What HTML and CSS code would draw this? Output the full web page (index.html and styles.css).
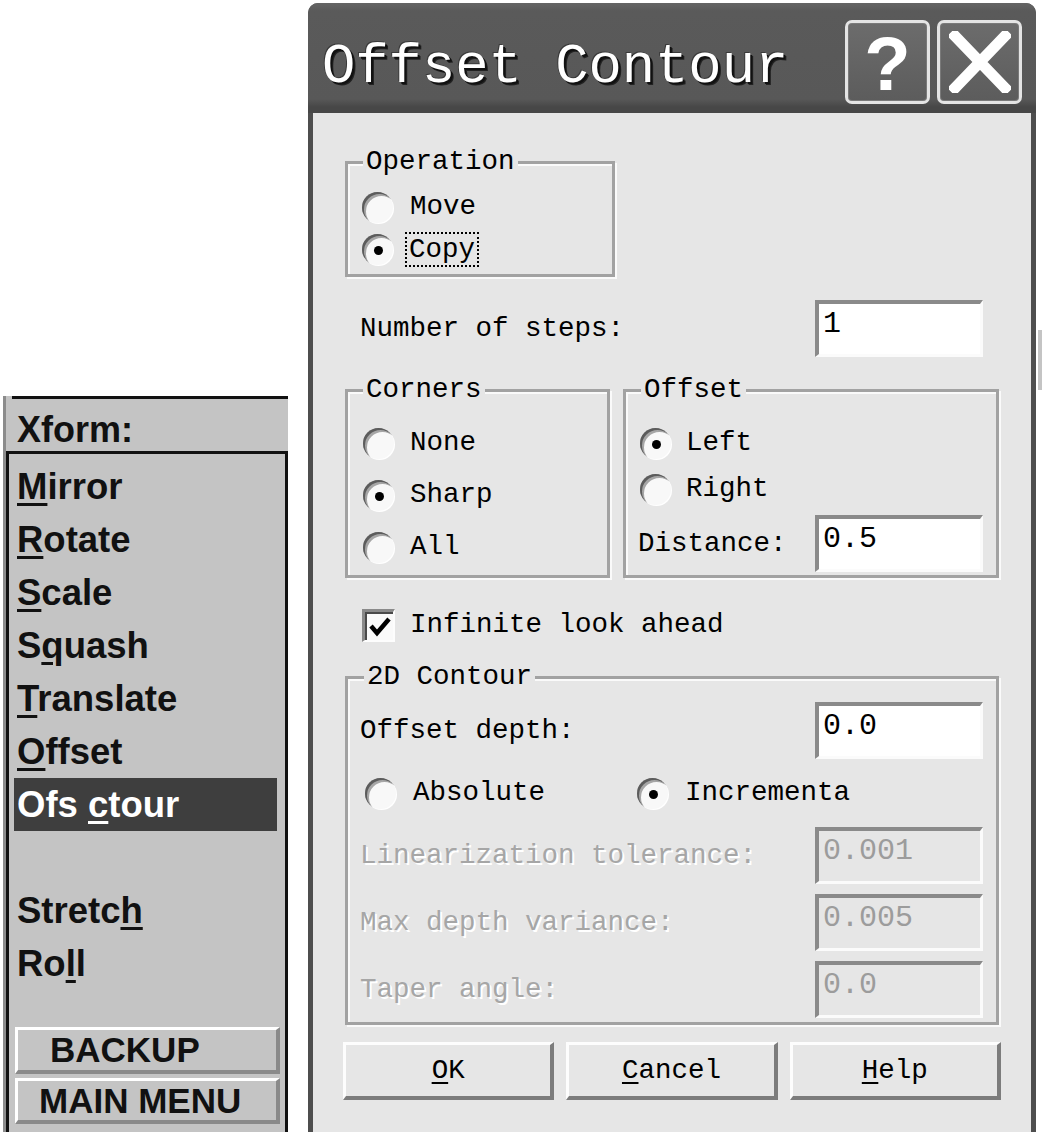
FILE: index.html
```html
<!DOCTYPE html>
<html>
<head>
<meta charset="utf-8">
<title>Offset Contour</title>
<link rel="stylesheet" href="styles.css">
</head>
<body>
<div class="screen">
  <aside class="xpanel">
    <div class="xhead">Xform:</div>
    <div class="xbox">
      <div class="xitem"><u>M</u>irror</div>
      <div class="xitem"><u>R</u>otate</div>
      <div class="xitem"><u>S</u>cale</div>
      <div class="xitem">S<u>q</u>uash</div>
      <div class="xitem"><u>T</u>ranslate</div>
      <div class="xitem"><u>O</u>ffset</div>
      <div class="xitem sel">Ofs <u>c</u>tour</div>
      <div class="xitem"></div>
      <div class="xitem">Stretc<u>h</u></div>
      <div class="xitem">Ro<u>l</u>l</div>
      <div class="xbtn backup">BACKUP</div>
      <div class="xbtn mainmenu">MAIN MENU</div>
    </div>
  </aside>

  <section class="dialog">
    <header class="titlebar">
      <span class="title">Offset Contour</span>
      <span class="tbtn help">?</span>
      <span class="tbtn close">
        <svg width="62" height="62" viewBox="0 0 62 62"><path d="M6 5 L56 57 M56 5 L6 57" stroke="#fff" stroke-width="11" stroke-linecap="square" fill="none"/></svg>
      </span>
    </header>

    <div class="client">
      <fieldset class="group g-op">
        <legend>Operation</legend>
        <div class="opt"><span class="radio"></span><span class="lbl">Move</span></div>
        <div class="opt"><span class="radio on"></span><span class="lbl focus">Copy</span></div>
      </fieldset>

      <div class="field f-steps"><span class="lbl">Number of steps:</span><span class="input">1</span></div>

      <div class="pair">
        <fieldset class="group g-corners">
          <legend>Corners</legend>
          <div class="opt"><span class="radio"></span><span class="lbl">None</span></div>
          <div class="opt"><span class="radio on"></span><span class="lbl">Sharp</span></div>
          <div class="opt"><span class="radio"></span><span class="lbl">All</span></div>
        </fieldset>
        <fieldset class="group g-offset">
          <legend>Offset</legend>
          <div class="opt"><span class="radio on"></span><span class="lbl">Left</span></div>
          <div class="opt"><span class="radio"></span><span class="lbl">Right</span></div>
          <div class="field f-dist"><span class="lbl">Distance:</span><span class="input">0.5</span></div>
        </fieldset>
      </div>

      <div class="check-row">
        <span class="check"><svg width="26" height="26" viewBox="0 0 26 26"><path d="M4 12 L10 19 L22 5" stroke="#000" stroke-width="4.5" fill="none"/></svg></span>
        <span class="lbl">Infinite look ahead</span>
      </div>

      <fieldset class="group g-2d">
        <legend>2D Contour</legend>
        <div class="field f-in"><span class="lbl">Offset depth:</span><span class="input">0.0</span></div>
        <div class="radio-row">
          <div class="opt opt-a"><span class="radio"></span><span class="lbl">Absolute</span></div>
          <div class="opt opt-b"><span class="radio on"></span><span class="lbl">Incrementa</span></div>
        </div>
        <div class="field f-in dis"><span class="lbl">Linearization tolerance:</span><span class="input">0.001</span></div>
        <div class="field f-in dis"><span class="lbl">Max depth variance:</span><span class="input">0.005</span></div>
        <div class="field f-in dis"><span class="lbl">Taper angle:</span><span class="input">0.0</span></div>
      </fieldset>

      <div class="buttons">
        <span class="btn"><u>O</u>K</span>
        <span class="btn"><u>C</u>ancel</span>
        <span class="btn"><u>H</u>elp</span>
      </div>
    </div>
  </section>

  <div class="edge"></div>
</div>
</body>
</html>
```

FILE: styles.css
```css
* { box-sizing: border-box; }

body {
  margin: 0;
  background: #ffffff;
  overflow: hidden;
}

.screen {
  display: flex;
  align-items: flex-start;
  height: 1132px;
  overflow: hidden;
}

/* ---------- left Xform panel ---------- */
.xpanel {
  align-self: stretch;
  margin-top: 396px;
  margin-left: 3px;
  width: 285px;
  border-left: 3px solid #8c8c8c;
  display: flex;
  flex-direction: column;
  font-family: "Liberation Sans", Arial, sans-serif;
  font-weight: bold;
  color: #111;
}

.xhead {
  height: 55px;
  padding: 14px 0 0 11px;
  font-size: 36px;
  line-height: 40px;
  background: linear-gradient(#111, #111) 6px 0 / 100% 3px no-repeat, #c4c4c4;
}

.xbox {
  flex: 1;
  border: 3px solid #111;
  border-bottom: none;
  background: #c4c4c4;
  padding-top: 6px;
}

.xitem {
  height: 53px;
  line-height: 53px;
  margin: 0 8px 0 5px;
  padding-left: 3px;
  font-size: 36.5px;
  white-space: nowrap;
}

.xitem u,
.xbtn u {
  text-decoration-thickness: 3px;
  text-underline-offset: 4px;
}

.xitem.sel {
  background: #3e3e3e;
  color: #fff;
}

.xbtn {
  display: flex;
  align-items: center;
  margin: 0 5px 0 6px;
  height: 47px;
  font-size: 35px;
  border-style: solid;
  border-width: 3px 4px 4px 3px;
  border-color: #ffffff #8a8a8a #8a8a8a #ffffff;
  background: #c4c4c4;
  white-space: nowrap;
}

.xbtn.backup {
  margin-top: 37px;
  padding-left: 32px;
}

.xbtn.mainmenu {
  margin-top: 4px;
  height: 46px;
  padding-left: 21px;
}

/* ---------- dialog ---------- */
.dialog {
  margin-top: 3px;
  margin-left: 20px;
  width: 728px;
  height: 1129px;
  background: #4e4e4e;
  border-radius: 10px 10px 0 0;
  display: flex;
  flex-direction: column;
  overflow: hidden;
  font-family: "Liberation Mono", "DejaVu Sans Mono", monospace;
  color: #000;
}

.titlebar {
  height: 110px;
  display: flex;
  align-items: flex-start;
  padding-right: 14px;
  background: linear-gradient(#656565 0, #5a5a5a 8px, #585858 96px, #474747 104px, #474747 110px);
}

.title {
  flex: 1;
  margin: 33px 0 0 14px;
  font-size: 55.5px;
  line-height: 63px;
  color: #fff;
  text-shadow: 2px 2px 0 #111, 3px 3px 0 #222, -1px -1px 0 #3a3a3a;
  white-space: nowrap;
}

.tbtn {
  margin-top: 17px;
  width: 85px;
  height: 84px;
  border: 3px solid #e4e4e4;
  border-radius: 7px;
  background: linear-gradient(#6c6c6c, #5c5c5c);
  display: flex;
  align-items: center;
  justify-content: center;
  box-shadow: inset 0 0 0 1px #7a7a7a;
}

.tbtn + .tbtn { margin-left: 7px; }

.tbtn.help {
  font-family: "Liberation Sans", Arial, sans-serif;
  font-weight: bold;
  font-size: 76px;
  line-height: 1;
  color: #fff;
  padding-top: 4px;
}

.client {
  flex: 1;
  margin: 0 5px;
  background: #e6e6e6;
  padding: 34px 32px 0 32px;
  display: flex;
  flex-direction: column;
  font-size: 27.5px;
}

.lbl {
  line-height: 30px;
  white-space: nowrap;
}

/* group boxes */
.group {
  margin: 0;
  padding: 0;
  min-inline-size: 0;
  border: 3px solid #a2a2a2;
  box-shadow: 2px 2px 0 #fafafa, inset 2px 2px 0 #fafafa;
}

.group legend {
  margin-left: 15px;
  padding: 0 3px;
  line-height: 30px;
  background: #e6e6e6;
}

.g-op {
  width: 270px;
  padding: 9px 0 4px 0;
}

.g-op .opt { height: 42px; padding-left: 14px; }

.opt {
  display: flex;
  align-items: center;
}

.opt .lbl { margin-left: 17px; }

.opt .lbl.focus {
  margin-left: 12px;
  padding: 0 2px;
  border: 2px dotted #000;
  line-height: 31px;
}

.radio {
  flex: none;
  width: 31px;
  height: 31px;
  border-radius: 50%;
  background: #f8f8f8;
  box-shadow: inset 2px 2px 0 #5c5c5c, inset 4px 4px 0 #a6a6a6, 1px 1px 0 #ffffff;
  display: flex;
  align-items: center;
  justify-content: center;
}

.radio.on::after {
  content: "";
  width: 9px;
  height: 9px;
  border-radius: 50%;
  background: #000;
  margin: 2px 0 0 2px;
}

/* text fields */
.field {
  display: flex;
  align-items: center;
  justify-content: space-between;
  height: 57px;
}

.input {
  width: 168px;
  height: 57px;
  border-style: solid;
  border-width: 4px 3px 3px 4px;
  border-color: #8a8a8a #fbfbfb #fbfbfb #8a8a8a;
  background: #ffffff;
  padding: 2px 4px;
  font-size: 30px;
  line-height: 36px;
}

.f-steps {
  margin-top: 23px;
  padding: 0 16px 0 15px;
}

.pair {
  display: flex;
  gap: 13px;
  margin-top: 18px;
}

.g-corners {
  width: 265px;
  padding: 12px 0 2px 0;
}

.g-corners .opt { height: 52px; padding-left: 15px; }
.g-corners .opt .lbl { margin-left: 16px; }

.g-offset {
  flex: 1;
  padding: 15px 0 3px 0;
}

.g-offset .opt { height: 46px; padding-left: 14px; }
.g-offset .opt .lbl { margin-left: 15px; }

.f-dist {
  margin-top: 3px;
  padding: 0 13px 0 12px;
}

.check-row {
  display: flex;
  align-items: center;
  height: 40px;
  margin-top: 27px;
  padding-left: 17px;
}

.check {
  flex: none;
  width: 33px;
  height: 33px;
  background: #fafafa;
  border-style: solid;
  border-width: 3px 2px 2px 3px;
  border-color: #8a8a8a #fdfdfd #fdfdfd #8a8a8a;
  box-shadow: inset 2px 2px 0 #4a4a4a;
  display: flex;
  align-items: center;
  justify-content: center;
  padding: 2px 0 0 2px;
}

.check-row .lbl { margin-left: 15px; }

.g-2d {
  margin-top: 17px;
  padding: 10px 0 4px 0;
}

.g-2d legend { margin-left: 16px; }

.f-in {
  padding: 0 13px 0 12px;
}

.f-in + .radio-row,
.radio-row + .f-in,
.f-in + .f-in {
  margin-top: 10px;
}

.radio-row {
  display: flex;
  height: 48px;
  padding-left: 17px;
}

.opt-a { width: 272px; }
.radio-row .opt .lbl { margin-left: 17px; }

.dis .lbl {
  color: #a6a6a6;
  text-shadow: 2px 2px 0 #ffffff;
}

.dis .input {
  background: #e6e6e6;
  color: #9c9c9c;
}

.buttons {
  display: flex;
  gap: 12px;
  margin: 17px -2px 0 -2px;
}

.btn {
  flex: 1;
  height: 58px;
  display: flex;
  align-items: center;
  justify-content: center;
  border-style: solid;
  border-width: 3px 4px 4px 3px;
  border-color: #fdfdfd #7c7c7c #7c7c7c #fdfdfd;
  background: #e6e6e6;
  line-height: 30px;
}

.btn u {
  text-decoration-thickness: 2px;
  text-underline-offset: 4px;
}

/* right desktop edge */
.edge {
  align-self: stretch;
  width: 6px;
  background: linear-gradient(#c4c4c4, #c4c4c4) 2px 330px / 4px 60px no-repeat, #ffffff;
}
```
